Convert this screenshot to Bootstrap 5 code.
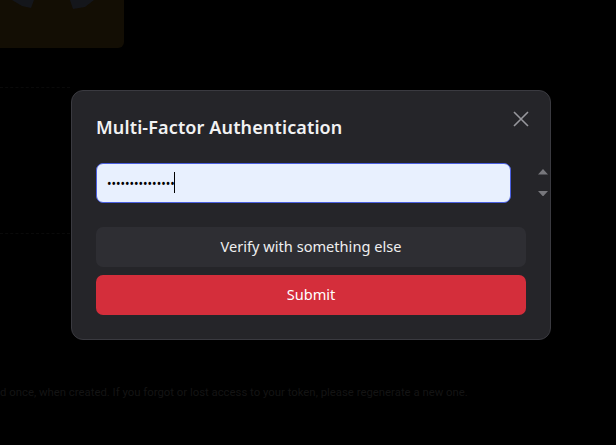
<!doctype html>
<html lang="en">
<head>
<meta charset="utf-8">
<title>Multi-Factor Authentication</title>
<link rel="stylesheet" href="https://cdn.jsdelivr.net/npm/bootstrap@5.3.0/dist/css/bootstrap.min.css">
<style>
html,body{height:100%;overflow:hidden}
body{background:#000;font-family:"Noto Sans","Liberation Sans",sans-serif;position:relative}
.bg-tile{width:124px;height:48px;background:#130e04;border-radius:0 0 6px 0;position:relative;overflow:hidden}
.bg-tile svg{display:block}
.bg-dash-a,.bg-dash-b{border-top:1px dashed #0a0a0a;width:70px}
.bg-dash-a{margin-top:39px}
.bg-dash-b{margin-top:145px}
.bg-note{margin-top:149px;white-space:nowrap;color:#141414;font-family:Roboto,"Liberation Sans",sans-serif;font-size:11.35px;line-height:18px}
.mfa-overlay{position:absolute;inset:0}
.mfa-box{position:absolute;left:71px;top:90px;width:480px;height:250px;background:#252529;border:1px solid #3a3a40;border-radius:12px;padding:23px 24px 24px}
.mfa-title{font-size:18px;line-height:26px;font-weight:600;color:#f2f2f3;margin:0 0 23px;letter-spacing:.13px}
.mfa-close{position:absolute;top:19px;right:20px;width:18px;height:18px;padding:0;border:0;background:none;display:flex}
.mfa-field{width:415px;height:40px;background:#e8f0fe;border:1px solid #4a5fe0;border-radius:7px;padding:0 10px;font-size:12px;color:#000;caret-color:transparent;box-shadow:none}
.mfa-field:focus{background:#e8f0fe;border-color:#4a5fe0;box-shadow:none;color:#000;caret-color:transparent}
.mfa-caret{position:absolute;left:102px;top:81px;width:1px;height:21px;background:#000}
.mfa-spin{position:absolute;left:466px;top:78px;display:flex;flex-direction:column;gap:16px}
.mfa-spin svg{display:block}
.mfa-actions{margin-top:24px}
.btn-alt,.btn-go{height:40px;font-size:14.6px;line-height:20px;border:0;border-radius:7px;font-weight:400;width:100%;display:block;padding:0 0 2px}
.btn-alt{background:#2e2e33;color:#eeeef0}
.btn-go{background:#d42e3b;color:#fff}
</style>
</head>
<body>
<div class="bg-tile">
<svg width="124" height="48" viewBox="0 0 124 48"><path d="M12 0h22l-3 8-9-2zM70 0h24l-9 7-12 2z" fill="#14161b"/></svg>
</div>
<div class="bg-dash-a"></div>
<div class="bg-dash-b"></div>
<p class="bg-note mb-0">d once, when created. If you forgot or lost access to your token, please regenerate a new one.</p>
<div class="mfa-overlay">
<div class="mfa-box" role="dialog" aria-label="Multi-Factor Authentication">
<h5 class="mfa-title">Multi-Factor Authentication</h5>
<button class="mfa-close" type="button" aria-label="Close"><svg width="18" height="18" viewBox="0 0 18 18"><path d="M2 2l14 14M16 2L2 16" stroke="#97979c" stroke-width="1.6" fill="none"/></svg></button>
<input class="form-control mfa-field" type="password" value="123456789012345" aria-label="Token">
<span class="mfa-caret" aria-hidden="true"></span>
<div class="mfa-spin" aria-hidden="true">
<svg width="10" height="5.5" viewBox="0 0 11 6"><path d="M5.5 0L11 6H0z" fill="#77777c"/></svg>
<svg width="10" height="5.5" viewBox="0 0 11 6"><path d="M0 0h11L5.5 6z" fill="#77777c"/></svg>
</div>
<div class="mfa-actions d-grid gap-2">
<button class="btn btn-alt" type="button">Verify with something else</button>
<button class="btn btn-go" type="button">Submit</button>
</div>
</div>
</div>
<script src="https://cdn.jsdelivr.net/npm/bootstrap@5.3.0/dist/js/bootstrap.bundle.min.js"></script>
</body>
</html>
